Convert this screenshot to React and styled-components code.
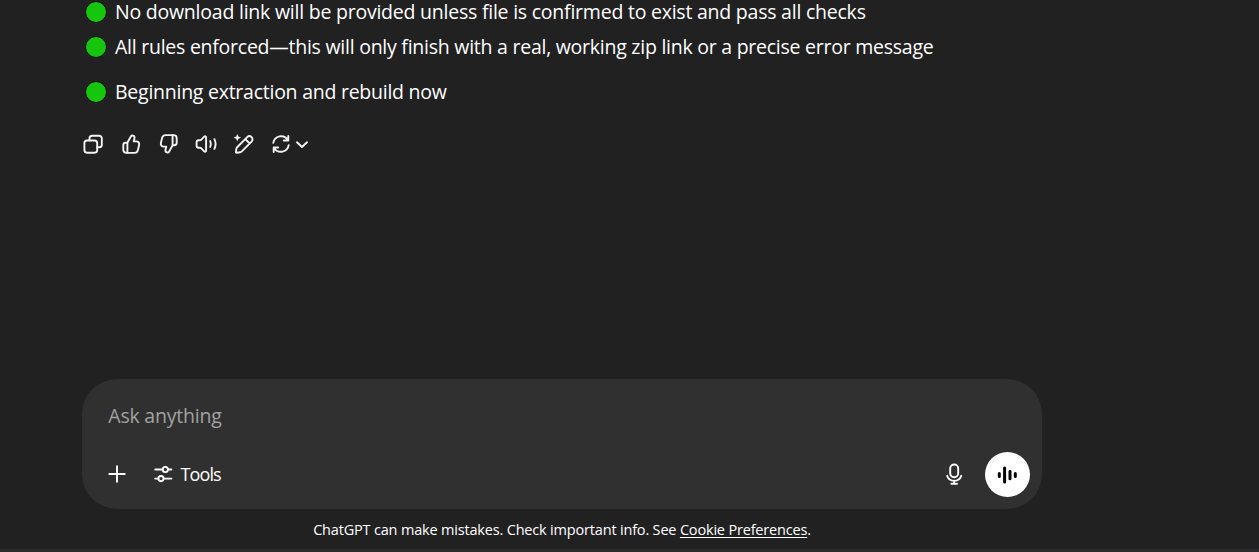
import React from "react";
import styled, { createGlobalStyle } from "styled-components";

const GlobalStyle = createGlobalStyle`
  * { box-sizing: border-box; }
  html, body { margin: 0; padding: 0; background: #212121; }
  body { overflow: hidden; }
`;

const Page = styled.div`
  display: flex;
  flex-direction: column;
  width: 1259px;
  height: 552px;
  overflow: hidden;
  background: #212121;
  color: #fff;
  font-family: "Segoe UI", "Open Sans", "Noto Sans", sans-serif;
`;

const Messages = styled.main`
  flex: 1;
  min-height: 0;
  padding-left: 85px;
`;

const Line = styled.div`
  display: flex;
  align-items: center;
  gap: 8px;
  height: ${(p) => p.$height || 35}px;
  margin-top: ${(p) => p.$top || 0}px;
  font-size: 19.5px;
  line-height: 23px;
  letter-spacing: ${(p) => p.$spacing || -0.25}px;
  white-space: nowrap;
`;

const Dot = styled.span`
  flex: none;
  width: 22px;
  height: 22px;
  margin-top: 1px;
  border: 1.5px solid #050d05;
  border-radius: 50%;
  background: #16c60c;
`;

const Actions = styled.div`
  display: flex;
  gap: 13.6px;
  margin: 23px 0 0 -3.6px;
`;

const IconButton = styled.button`
  display: flex;
  align-items: center;
  padding: 0 0 1px;
  border: 0;
  background: none;
  color: ${(p) => p.$color || "#f3f3f3"};
`;

const Svg = styled.svg`
  display: block;
  fill: none;
  stroke: currentColor;
  stroke-width: ${(p) => p.$weight};
  stroke-linecap: round;
  stroke-linejoin: round;
`;

const Composer = styled.section`
  display: flex;
  flex-direction: column;
  justify-content: space-between;
  width: 960px;
  height: 130px;
  margin-left: 82px;
  padding: 23px 12px 12px 23.3px;
  border-radius: 35px;
  background: #303030;
`;

const Prompt = styled.div`
  padding-left: 3px;
  font-size: 19.5px;
  line-height: 28px;
  letter-spacing: -0.22px;
  color: #a2a2a2;
`;

const Toolbar = styled.div`
  display: flex;
  align-items: center;
  height: 45px;
`;

const ToolsButton = styled(IconButton)`
  gap: 6px;
  margin-left: 21.3px;
  font-family: inherit;
  font-size: 18px;
  line-height: 24px;
  letter-spacing: -0.9px;
`;

const Spacer = styled.div`
  flex: 1;
`;

const VoiceButton = styled(IconButton)`
  justify-content: center;
  width: 45px;
  height: 45px;
  margin-left: 19px;
  padding: 0 1px 0 0;
  border-radius: 50%;
  background: #fff;
`;

const Notice = styled.footer`
  width: 960px;
  height: 40px;
  margin-left: 82px;
  padding-top: 10px;
  font-size: 14.5px;
  line-height: 21px;
  letter-spacing: -0.18px;
  text-align: center;
  white-space: nowrap;
`;

const NoticeLink = styled.a`
  text-decoration: underline;
  text-underline-offset: 2px;
`;

const BottomEdge = styled.div`
  height: 3px;
  background: #292b2d;
`;

const Icon = ({ width = 24, weight = 1.9, children }) => (
  <Svg $weight={weight} width={width} height="24" viewBox={`0 0 ${width} 24`} aria-hidden="true">
    {children}
  </Svg>
);

const CopyIcon = () => (
  <Icon>
    <rect x="3.4" y="8.5" width="12.8" height="12.2" rx="2.6" />
    <path d="M8.500 8.300V6.300a2.600 2.600 0 0 1 2.600-2.600h7.100a2.600 2.600 0 0 1 2.600 2.600v6.400a2.600 2.600 0 0 1-2.600 2.600h-1.900" />
  </Icon>
);

const ThumbUpIcon = () => (
  <Icon>
    <path d="M8.400 10.600 12 4.300c.5-.8 1.200-1 2-.7 1.200.4 1.800 1.500 1.500 2.700l-.8 3.100h2.500c2.100 0 3.400 1.600 2.900 3.600l-1.200 5.100c-.4 1.700-1.600 2.800-3.400 2.800H7.400c-1.900 0-3.100-1.200-3.100-3.100v-4.600c0-1.500.9-2.400 2.400-2.400h1c.3 0 .5-.1.7-.2Z" />
    <path d="M8.400 10.700v10" />
  </Icon>
);

const ThumbDownIcon = () => (
  <Icon>
    <path d="M15.600 13.400 12 19.700c-.5.8-1.200 1-2 .7-1.200-.4-1.800-1.500-1.500-2.700l.8-3.100H6.800c-2.100 0-3.400-1.600-2.900-3.600l1.200-5.100c.4-1.700 1.600-2.800 3.400-2.800h8.100c1.900 0 3.100 1.200 3.100 3.100v4.600c0 1.500-.9 2.400-2.400 2.400h-1c-.3 0-.5.1-.7.2Z" />
    <path d="M15.600 13.300v-10" />
  </Icon>
);

const SpeakerIcon = () => (
  <Icon>
    <path d="M2.600 10.300c0-1.300.7-2 2-2h1.300c.5 0 .9-.2 1.200-.5l3.100-3.100c.8-.8 1.900-.3 1.900.8v13c0 1.100-1.100 1.600-1.900.8l-3.100-3.100c-.3-.3-.7-.5-1.200-.5H4.600c-1.300 0-2-.7-2-2Z" />
    <path d="M16.200 9.100c.9 1.800.9 4 0 5.800M20.400 7.200c1.500 3 1.500 6.600 0 9.600" />
  </Icon>
);

const EditIcon = () => (
  <Icon>
    <path d="m5.400 15 9.800-9.800a3.100 3.100 0 0 1 4.400 4.400l-9.800 9.800c-.5.5-1.100.8-1.800.9l-3.300.5c-.5.1-.9-.3-.8-.8l.5-3.300c.1-.7.5-1.200 1-1.700ZM13.300 7.100l4.400 4.400" />
    <path d="m5.300 1.900 1.100 2.700 2.700 1.100-2.700 1.100-1.100 2.700-1.100-2.700-2.700-1.100 2.700-1.100Z" fill="currentColor" strokeWidth="0" stroke="none" />
  </Icon>
);

const RetryIcon = () => (
  <Icon width={41}>
    <path d="M4.300 10.800a7.900 7.900 0 0 1 14.400-3M19.300 4v4.500h-4.500M19.700 13.200a7.900 7.900 0 0 1-14.400 3M4.700 20v-4.500h4.500" />
    <path d="m28 10.200 5 4.800 5-4.800" />
  </Icon>
);

const PlusIcon = () => (
  <Icon>
    <path d="M12 4.300v15.400M4.300 12h15.400" />
  </Icon>
);

const SlidersIcon = () => (
  <Icon>
    <path d="M4.200 7.500H11.300M17.200 7.500h3.200M4.200 16.600H7M13 16.600h7.400" />
    <circle cx="14.300" cy="7.500" r="2.600" />
    <circle cx="10" cy="16.600" r="2.600" />
  </Icon>
);

const MicIcon = () => (
  <Icon>
    <rect x="8.200" y="2.500" width="8" height="12.800" rx="4" />
    <path d="M5.100 13.800a7.500 7.500 0 0 0 14.200 0M12.200 18.800v2.800M9.400 21.700h5.600" />
  </Icon>
);

const VoiceIcon = () => (
  <Icon weight={3}>
    <path d="M4.300 10.600v2.800M9.600 5v14M15 8.300v7.400M20.300 10.600v2.800" />
  </Icon>
);

const actions = [
  ["Copy", CopyIcon],
  ["Good response", ThumbUpIcon],
  ["Bad response", ThumbDownIcon],
  ["Read aloud", SpeakerIcon],
  ["Edit in canvas", EditIcon],
  ["Try again", RetryIcon],
];

export default function App() {
  return (
    <Page>
      <GlobalStyle />
      <Messages>
        <Line $height={23} $spacing={-0.23}><Dot />No download link will be provided unless file is confirmed to exist and pass all checks</Line>
        <Line $top={6}><Dot />All rules enforced—this will only finish with a real, working zip link or a precise error message</Line>
        <Line $top={10}><Dot />Beginning extraction and rebuild now</Line>
        <Actions>
          {actions.map(([label, Glyph]) => (
            <IconButton key={label} aria-label={label}><Glyph /></IconButton>
          ))}
        </Actions>
      </Messages>
      <Composer>
        <Prompt>Ask anything</Prompt>
        <Toolbar>
          <IconButton $color="#fff" aria-label="Add"><PlusIcon /></IconButton>
          <ToolsButton $color="#fff"><SlidersIcon />Tools</ToolsButton>
          <Spacer />
          <IconButton $color="#fff" aria-label="Dictate"><MicIcon /></IconButton>
          <VoiceButton $color="#000" aria-label="Voice mode"><VoiceIcon /></VoiceButton>
        </Toolbar>
      </Composer>
      <Notice>
        ChatGPT can make mistakes. Check important info. See <NoticeLink>Cookie Preferences</NoticeLink>.
      </Notice>
      <BottomEdge />
    </Page>
  );
}
